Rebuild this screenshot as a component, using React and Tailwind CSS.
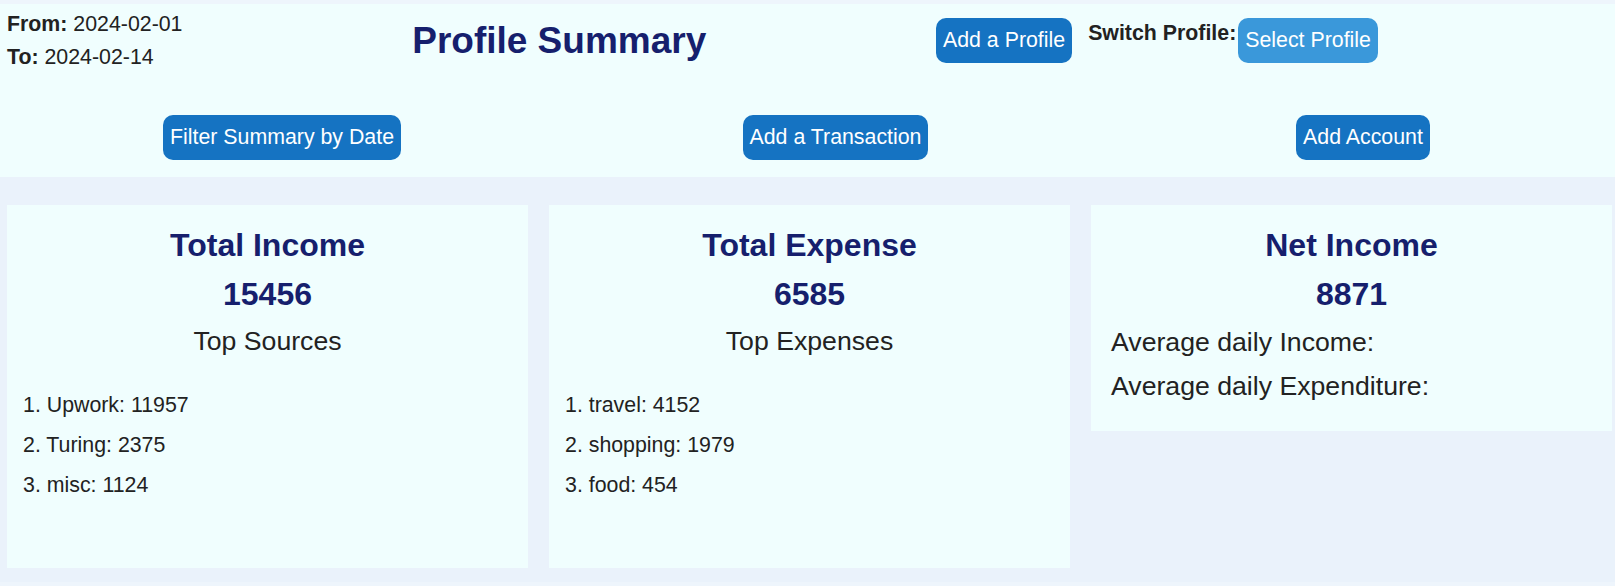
import React from 'react';

const incomeSources = [
  { name: 'Upwork', amount: 11957 },
  { name: 'Turing', amount: 2375 },
  { name: 'misc', amount: 1124 },
];

const expenses = [
  { name: 'travel', amount: 4152 },
  { name: 'shopping', amount: 1979 },
  { name: 'food', amount: 454 },
];

const Button = ({ children, light }) => (
  <button
    className={`rounded-[10px] px-[7px] py-[10px] text-[21.33px] leading-[24.5px] text-white ${
      light ? 'bg-[#3A98DA]' : 'bg-[#1573C2]'
    }`}
  >
    {children}
  </button>
);

const TopCard = ({ title, total, subtitle, items }) => (
  <div className="bg-[#F0FEFE] h-[363px] pt-[22px] px-[16px]">
    <h2 className="text-center text-[32px] leading-[37px] font-bold text-[#161F6D]">{title}</h2>
    <div className="mt-[12px] text-center text-[32px] leading-[37px] font-bold text-[#161F6D]">{total}</div>
    <div className="mt-[13px] text-center text-[26.67px] leading-[31px]">{subtitle}</div>
    <ol className="mt-[28px] text-[21.33px] leading-[40px]">
      {items.map((item, i) => (
        <li key={item.name}>
          {i + 1}. {item.name}: {item.amount}
        </li>
      ))}
    </ol>
  </div>
);

const App = () => {
  return (
    <div className="min-h-screen bg-[#EEF5FC] pt-[4px] font-['Liberation_Sans',Arial,sans-serif] text-[#222]">
      <header className="bg-[#F0FEFE] h-[173px] pl-[7px] pr-[3px]">
        <div className="flex justify-between items-start h-[111px]">
          <div className="pt-[4px] text-[21.33px] leading-[32.5px]">
            <div>
              <b>From:</b> 2024-02-01
            </div>
            <div>
              <b>To:</b> 2024-02-14
            </div>
          </div>
          <h1 className="mt-[15px] text-[37px] leading-[44px] font-bold text-[#161F6D]">Profile Summary</h1>
          <div className="mt-[14px] w-[676px] flex items-start">
            <Button>Add a Profile</Button>
            <span className="ml-[16px] mt-[3px] text-[21.33px] leading-[25px] font-bold">Switch Profile:</span>
            <div className="ml-[2px]">
              <Button light>Select Profile</Button>
            </div>
          </div>
        </div>
        <div className="grid grid-cols-[550px_557px_1fr] justify-items-center">
          <Button>Filter Summary by Date</Button>
          <Button>Add a Transaction</Button>
          <Button>Add Account</Button>
        </div>
      </header>

      <main className="bg-[#EAF2FB] pt-[28px] pb-[14px] pl-[7px] pr-[3px] grid grid-cols-3 gap-[21px] items-start">
        <TopCard title="Total Income" total={15456} subtitle="Top Sources" items={incomeSources} />
        <TopCard title="Total Expense" total={6585} subtitle="Top Expenses" items={expenses} />
        <div className="bg-[#F0FEFE] pt-[22px] pb-[23px] px-[20px]">
          <h2 className="text-center text-[32px] leading-[37px] font-bold text-[#161F6D]">Net Income</h2>
          <div className="mt-[12px] text-center text-[32px] leading-[37px] font-bold text-[#161F6D]">8871</div>
          <div className="mt-[7px] text-[26.67px] leading-[44px]">
            <div>Average daily Income:</div>
            <div>Average daily Expenditure:</div>
          </div>
        </div>
      </main>
    </div>
  );
};

export default App;
